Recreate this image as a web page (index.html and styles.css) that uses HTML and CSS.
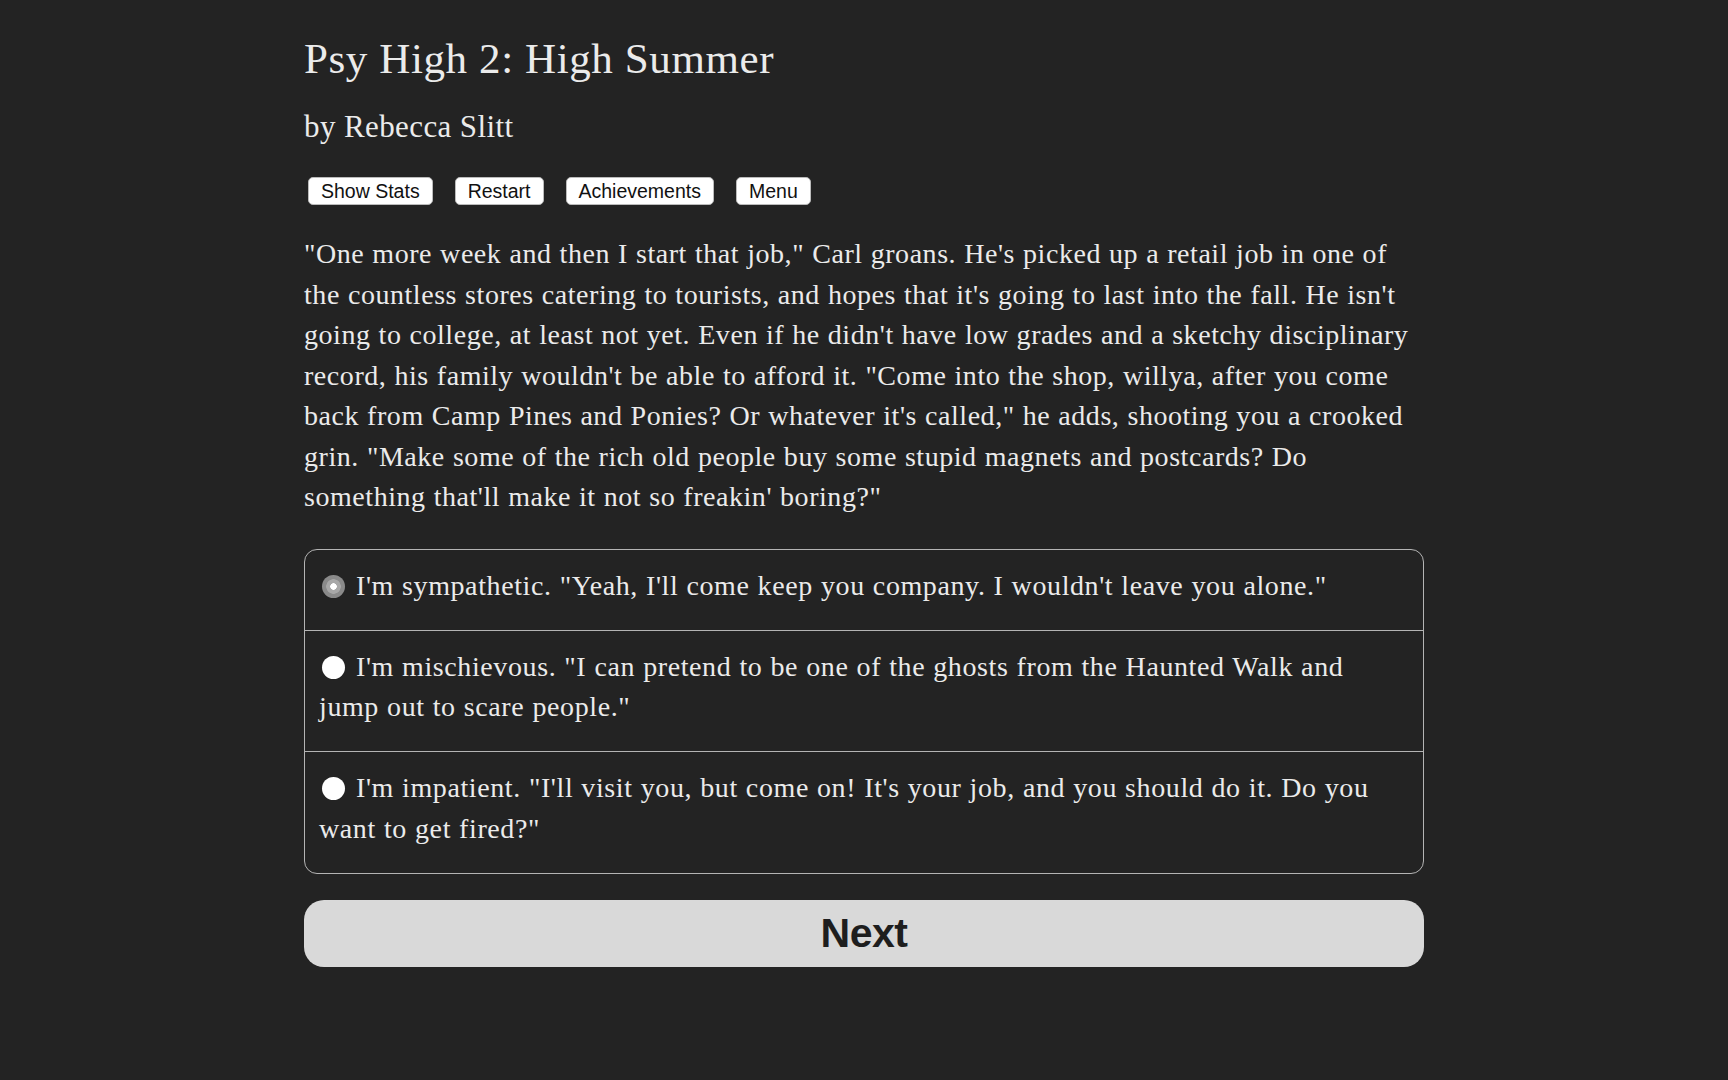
FILE: index.html
```html
<!DOCTYPE html>
<html lang="en">
<head>
<meta charset="utf-8">
<title>Psy High 2: High Summer</title>
<link rel="stylesheet" href="styles.css">
</head>
<body>
<div class="container">
  <h1 class="title">Psy High 2: High Summer</h1>
  <h2 class="author">by Rebecca Slitt</h2>
  <div class="buttons">
    <button class="spacedLink">Show Stats</button>
    <button class="spacedLink">Restart</button>
    <button class="spacedLink">Achievements</button>
    <button class="spacedLink">Menu</button>
  </div>
  <p class="story">"One more week and then I start that job," Carl groans. He's picked up a retail job in one of the countless stores catering to tourists, and hopes that it's going to last into the fall. He isn't going to college, at least not yet. Even if he didn't have low grades and a sketchy disciplinary record, his family wouldn't be able to afford it. "Come into the shop, willya, after you come back from Camp Pines and Ponies? Or whatever it's called," he adds, shooting you a crooked grin. "Make some of the rich old people buy some stupid magnets and postcards? Do something that'll make it not so freakin' boring?"</p>
  <div class="choices">
    <div class="choice"><span class="radio checked"></span>I'm sympathetic. "Yeah, I'll come keep you company. I wouldn't leave you alone."</div>
    <div class="choice"><span class="radio"></span>I'm mischievous. "I can pretend to be one of the ghosts from the Haunted Walk and jump out to scare people."</div>
    <div class="choice"><span class="radio"></span>I'm impatient. "I'll visit you, but come on! It's your job, and you should do it. Do you want to get fired?"</div>
  </div>
  <button class="next">Next</button>
</div>
</body>
</html>
```
FILE: styles.css
```css
html, body {
  margin: 0;
  padding: 0;
  background: #232323;
}
body {
  color: #ebebeb;
  font-family: "Liberation Serif", "Times New Roman", serif;
  font-size: 28px;
}
.container {
  width: 1120px;
  margin: 0 auto;
  padding-top: 35px;
}
.title {
  margin: 0;
  font-weight: normal;
  font-size: 43px;
  line-height: 48px;
  letter-spacing: 0.6px;
}
.author {
  margin: 26px 0 0;
  font-weight: normal;
  font-size: 31px;
  line-height: 36px;
  letter-spacing: 0.4px;
}
.buttons {
  display: flex;
  gap: 22px;
  margin: 32px 0 0 4px;
}
.spacedLink {
  font-family: "Liberation Sans", Arial, sans-serif;
  font-size: 19.5px;
  height: 28px;
  padding: 0 12px;
  background: #ffffff;
  color: #111;
  border: 1px solid #bbb;
  border-radius: 5px;
  line-height: 26px;
}
.story {
  margin: 29px 0 0;
  line-height: 40.5px;
  letter-spacing: 0.55px;
  word-spacing: 0.5px;
}
.choices {
  margin-top: 31px;
  border: 1px solid #b4b4b4;
  border-radius: 13px;
  overflow: hidden;
}
.choice {
  padding: 16px 14px 23.5px 14px;
  line-height: 40.5px;
  letter-spacing: 0.6px;
  word-spacing: 0.5px;
}
.choice + .choice {
  border-top: 1px solid #b4b4b4;
}
.radio {
  display: inline-block;
  box-sizing: border-box;
  width: 23px;
  height: 23px;
  border-radius: 50%;
  background: #ffffff;
  margin: 0 11px 0 3px;
  vertical-align: -3px;
}
.radio.checked {
  background: radial-gradient(circle, #ffffff 0 3px, #a8a8a8 3.5px 7px, #8a8a8a 7.5px);
}
.next {
  display: block;
  width: 100%;
  height: 67px;
  margin-top: 26px;
  background: #d9d9d9;
  color: #1e1e1e;
  border: none;
  border-radius: 20px;
  font-family: "Liberation Sans", Arial, sans-serif;
  font-weight: bold;
  font-size: 41px;
  letter-spacing: -0.5px;
}
```
